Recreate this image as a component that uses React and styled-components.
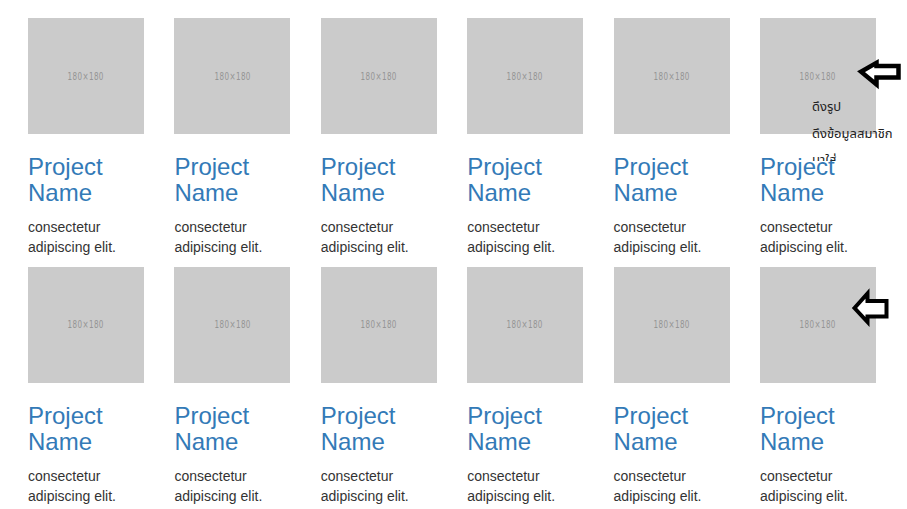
import React from "react";
import styled, { createGlobalStyle } from "styled-components";

const Global = createGlobalStyle`
  html, body { margin: 0; padding: 0; background: #fff; }
  body { font-family: "Liberation Sans", Arial, sans-serif; color: #333; overflow: hidden; }
`;

const Page = styled.div`
  position: relative;
  width: 907px;
  height: 509px;
  padding: 18px 0 0 28px;
  box-sizing: border-box;
`;

const Grid = styled.div`
  display: grid;
  grid-template-columns: repeat(6, 116.4px);
  column-gap: 30px;
`;

const Item = styled.div`
  display: flex;
  flex-direction: column;
`;

const Thumb = styled.div`
  width: 116px;
  height: 116px;
  background: #cbcbcb;
  display: flex;
  align-items: center;
  justify-content: center;
`;

const ThumbLabel = styled.span`
  font-family: "DejaVu Sans Condensed", "Liberation Sans Narrow", sans-serif;
  font-size: 10px;
  color: #959595;
  display: inline-block;
  transform: scaleX(0.8);
  letter-spacing: 0.5px;
`;

const Title = styled.h3`
  margin: 20px 0 10px;
  font-size: 24px;
  line-height: 26.4px;
  font-weight: 400;
  color: #337ab7;
`;

const Desc = styled.p`
  margin: 0 0 10px;
  font-size: 14px;
  line-height: 20px;
  color: #333;
`;

const Note = styled.div`
  position: absolute;
  left: 812px;
  top: 94px;
  height: 67px;
  overflow: hidden;
  font-family: "Noto Sans Thai", "DejaVu Sans", "Liberation Sans", sans-serif;
  font-size: 13px;
  line-height: 26.5px;
  color: #222;
`;

const Arrow = styled.svg`
  position: absolute;
  left: ${(p) => p.$x}px;
  top: ${(p) => p.$y}px;
  overflow: visible;
`;

function Card() {
  return (
    <Item>
      <Thumb>
        <ThumbLabel>180×180</ThumbLabel>
      </Thumb>
      <Title>
        Project
        <br />
        Name
      </Title>
      <Desc>
        consectetur
        <br />
        adipiscing elit.
      </Desc>
    </Item>
  );
}

export default function App() {
  const cards = Array.from({ length: 12 });
  return (
    <>
      <Global />
      <Page>
        <Grid>
          {cards.map((_, i) => (
            <Card key={i} />
          ))}
        </Grid>
        <Note>
          ดึงรูป
          <br />
          ดึงข้อมูลสมาชิก
          <br />
          มาใส่
        </Note>
        <Arrow $x={858} $y={60} width="44" height="28" viewBox="0 0 44 28">
          <polygon
            points="3,11.7 18.5,2.8 18.5,6 40.5,6 40.5,17.5 18.5,17.5 18.5,24.5"
            fill="#fff"
            stroke="#000"
            strokeWidth="4.5"
            strokeLinejoin="miter"
          />
        </Arrow>
        <Arrow $x={852} $y={291} width="38" height="34" viewBox="0 0 38 34">
          <polygon
            points="2.5,17 15.5,2.5 15.5,10 34.5,10 34.5,25.5 15.5,25.5 15.5,31"
            fill="#fff"
            stroke="#000"
            strokeWidth="4"
            strokeLinejoin="miter"
          />
        </Arrow>
      </Page>
    </>
  );
}
